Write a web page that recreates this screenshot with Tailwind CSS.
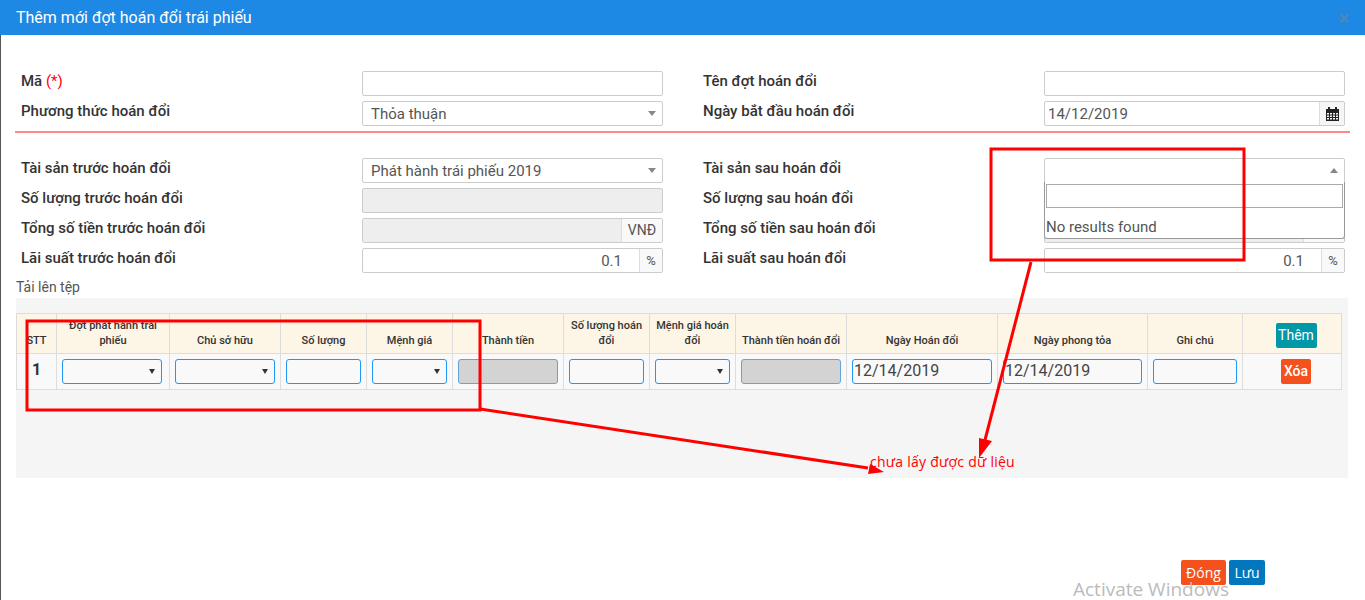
<!DOCTYPE html>
<html lang="vi">
<head>
    <meta charset="UTF-8">
    <title>Thêm mới đợt hoán đổi trái phiếu</title>
    <script src="https://cdn.jsdelivr.net/npm/@tailwindcss/browser@4"></script>
</head>
<body class="relative h-[600px] w-[1365px] overflow-hidden bg-white font-['Roboto',sans-serif] text-[#333]">
    <!-- header -->
    <div class="flex h-[35px] items-center justify-between bg-[#1e88e5] pl-[16px] pr-[16px] text-white">
        <h1 class="text-[16px] leading-none">Thêm mới đợt hoán đổi trái phiếu</h1>
        <span class="text-[20px] font-bold leading-none text-[#4f86b8]">×</span>
    </div>

    <div class="h-[565px] border-l border-[#555]">
        <!-- form top -->
        <div class="grid grid-cols-[341px_301px_40px_341px_301px] gap-y-[5px] pl-[20px] pt-[36px] text-[15px] font-medium">
            <label class="h-[25px] leading-[20px]">Mã <span class="font-normal text-[#f00]">(*)</span></label>
            <input class="h-[25px] rounded-[2px] border border-[#ccc] bg-white">
            <div></div>
            <label class="h-[25px] leading-[20px]">Tên đợt hoán đổi</label>
            <input class="h-[25px] rounded-[2px] border border-[#ccc] bg-white">

            <label class="h-[25px] leading-[20px]">Phương thức hoán đổi</label>
            <div class="flex h-[25px] items-center justify-between rounded-[2px] border border-[#ccc] pl-[8px] pr-[6px] font-normal text-[#555]">
                <span class="pt-[1px]">Thỏa thuận</span>
                <span class="h-0 w-0 border-x-[4px] border-t-[5px] border-x-transparent border-t-[#888]"></span>
            </div>
            <div></div>
            <label class="h-[25px] leading-[20px]">Ngày bắt đầu hoán đổi</label>
            <div class="flex h-[25px] items-center rounded-[2px] border border-[#ccc] font-normal text-[#555]">
                <span class="flex-1 pl-[3px] pt-[1px]">14/12/2019</span>
                <span class="flex h-full w-[25px] items-center justify-center border-l border-[#ddd] bg-[#f5f5f5]">
                    <svg width="13" height="14" viewBox="0 0 13 14"><path fill="#222" d="M0 2h2V0h2v2h5V0h2v2h2v12H0z"/><path fill="#f5f5f5" d="M1 6h2v1.500H1zM4 6h2v1.500H4zM7 6h2v1.500H7zM10 6h2v1.500h-2zM1 8.500h2V10H1zM4 8.500h2V10H4zM7 8.500h2V10H7zM10 8.500h2V10h-2zM1 11h2v1.500H1zM4 11h2v1.500H4zM7 11h2v1.500H7zM10 11h2v1.500h-2z"/></svg>
                </span>
            </div>
        </div>

        <div class="ml-[14px] mt-[5px] h-[2px] w-[1335px] bg-[#f88]"></div>

        <!-- form bottom -->
        <div class="grid grid-cols-[341px_301px_40px_341px_301px] gap-y-[5px] pl-[20px] pt-[25px] text-[15px] font-medium">
            <label class="h-[25px] leading-[20px]">Tài sản trước hoán đổi</label>
            <div class="flex h-[25px] items-center justify-between rounded-[2px] border border-[#ccc] pl-[8px] pr-[6px] font-normal text-[#555]">
                <span class="pt-[1px]">Phát hành trái phiếu 2019</span>
                <span class="h-0 w-0 border-x-[4px] border-t-[5px] border-x-transparent border-t-[#888]"></span>
            </div>
            <div></div>
            <label class="h-[25px] leading-[20px]">Tài sản sau hoán đổi</label>
            <div class="flex h-[25px] items-center justify-end rounded-[2px] border border-[#ccc] pr-[6px]">
                <span class="h-0 w-0 border-x-[4px] border-b-[5px] border-x-transparent border-b-[#888]"></span>
            </div>

            <label class="h-[25px] leading-[20px]">Số lượng trước hoán đổi</label>
            <div class="h-[25px] rounded-[2px] border border-[#ccc] bg-[#eee]"></div>
            <div></div>
            <label class="h-[25px] leading-[20px]">Số lượng sau hoán đổi</label>
            <div class="h-[25px] rounded-[2px] border border-[#ccc] bg-[#eee]"></div>

            <label class="h-[25px] leading-[20px]">Tổng số tiền trước hoán đổi</label>
            <div class="flex h-[25px] rounded-[2px] border border-[#ccc] font-normal">
                <div class="flex-1 bg-[#eee]"></div>
                <span class="flex w-[41px] items-center justify-center border-l border-[#ddd] bg-[#f9f9f9] text-[14px] text-[#555]">VNĐ</span>
            </div>
            <div></div>
            <label class="h-[25px] leading-[20px]">Tổng số tiền sau hoán đổi</label>
            <div class="flex h-[25px] rounded-[2px] border border-[#ccc] font-normal">
                <div class="flex-1 bg-[#eee]"></div>
                <span class="flex w-[41px] items-center justify-center border-l border-[#ddd] bg-[#f9f9f9] text-[14px] text-[#555]">VNĐ</span>
            </div>

            <label class="h-[25px] leading-[20px]">Lãi suất trước hoán đổi</label>
            <div class="flex h-[25px] items-center rounded-[2px] border border-[#ccc] font-normal text-[#555]">
                <span class="flex-1 pr-[17px] pt-[1px] text-right">0.1</span>
                <span class="flex h-full w-[23px] items-center justify-center border-l border-[#ddd] bg-[#f9f9f9] text-[13px]">%</span>
            </div>
            <div></div>
            <label class="h-[25px] leading-[20px]">Lãi suất sau hoán đổi</label>
            <div class="flex h-[25px] items-center rounded-[2px] border border-[#ccc] font-normal text-[#555]">
                <span class="flex-1 pr-[17px] pt-[1px] text-right">0.1</span>
                <span class="flex h-full w-[23px] items-center justify-center border-l border-[#ddd] bg-[#f9f9f9] text-[13px]">%</span>
            </div>
        </div>

        <div class="ml-[15px] mt-[6px] h-[19px] text-[14px] leading-[17px] text-[#555]">Tải lên tệp</div>

        <!-- upload table -->
        <div class="ml-[15px] h-[180px] w-[1332px] bg-[#f5f5f5] pt-[15px]">
            <table class="w-[1325px] table-fixed border-collapse border border-[#ddd] text-[11px]">
                <colgroup>
                    <col class="w-[40px]"><col class="w-[113px]"><col class="w-[111px]"><col class="w-[86px]"><col class="w-[86px]">
                    <col class="w-[111px]"><col class="w-[86px]"><col class="w-[86px]"><col class="w-[111px]"><col class="w-[151px]">
                    <col class="w-[150px]"><col class="w-[95px]"><col class="w-[99px]">
                </colgroup>
                <thead>
                    <tr class="h-[40px] bg-[#fdf5e6] text-center align-bottom font-medium leading-[15px]">
                        <th class="border border-[#ddd] pb-[5px] font-medium">STT</th>
                        <th class="border border-[#ddd] pb-[5px] font-medium">Đợt phát hành trái phiếu</th>
                        <th class="border border-[#ddd] pb-[5px] font-medium">Chủ sở hữu</th>
                        <th class="border border-[#ddd] pb-[5px] font-medium">Số lượng</th>
                        <th class="border border-[#ddd] pb-[5px] font-medium">Mệnh giá</th>
                        <th class="border border-[#ddd] pb-[5px] font-medium">Thành tiền</th>
                        <th class="border border-[#ddd] pb-[5px] font-medium">Số lượng hoán đổi</th>
                        <th class="border border-[#ddd] pb-[5px] font-medium">Mệnh giá hoán đổi</th>
                        <th class="border border-[#ddd] pb-[5px] font-medium">Thành tiền hoán đổi</th>
                        <th class="border border-[#ddd] pb-[5px] font-medium">Ngày Hoán đổi</th>
                        <th class="border border-[#ddd] pb-[5px] font-medium">Ngày phong tỏa</th>
                        <th class="border border-[#ddd] pb-[5px] font-medium">Ghi chú</th>
                        <th class="border border-[#ddd] pb-[5px] pl-[8px] font-medium">
                            <span class="inline-block h-[25px] w-[41px] rounded-[2px] bg-[#0097a7] text-center text-[14px] font-normal leading-[24px] text-white">Thêm</span>
                        </th>
                    </tr>
                </thead>
                <tbody>
                    <tr class="h-[36px] bg-[#f9f9f9] text-center">
                        <td class="border border-[#ddd] pb-[4px] text-[16px] font-bold">1</td>
                        <td class="border border-[#ddd] pl-[5px] pr-[7px]"><div class="flex h-[25px] items-center justify-end rounded-[3px] border border-[#2196f3] pr-[6px]"><span class="h-0 w-0 border-x-[3px] border-t-[5px] border-x-transparent border-t-[#333]"></span></div></td>
                        <td class="border border-[#ddd] px-[5px]"><div class="flex h-[25px] items-center justify-end rounded-[3px] border border-[#2196f3] pr-[6px]"><span class="h-0 w-0 border-x-[3px] border-t-[5px] border-x-transparent border-t-[#333]"></span></div></td>
                        <td class="border border-[#ddd] px-[5px]"><div class="h-[25px] rounded-[3px] border border-[#2196f3]"></div></td>
                        <td class="border border-[#ddd] px-[5px]"><div class="flex h-[25px] items-center justify-end rounded-[3px] border border-[#2196f3] pr-[6px]"><span class="h-0 w-0 border-x-[3px] border-t-[5px] border-x-transparent border-t-[#333]"></span></div></td>
                        <td class="border border-[#ddd] px-[5px]"><div class="h-[25px] rounded-[3px] border border-[#64a5d8] bg-[#d3d3d3]"></div></td>
                        <td class="border border-[#ddd] px-[5px]"><div class="h-[25px] rounded-[3px] border border-[#2196f3]"></div></td>
                        <td class="border border-[#ddd] px-[5px]"><div class="flex h-[25px] items-center justify-end rounded-[3px] border border-[#2196f3] pr-[6px]"><span class="h-0 w-0 border-x-[3px] border-t-[5px] border-x-transparent border-t-[#333]"></span></div></td>
                        <td class="border border-[#ddd] px-[5px]"><div class="h-[25px] rounded-[3px] border border-[#64a5d8] bg-[#d3d3d3]"></div></td>
                        <td class="border border-[#ddd] px-[5px]"><div class="h-[25px] rounded-[3px] border border-[#2196f3] pl-[1px] text-left text-[16px] leading-[21px] text-[#444]">12/14/2019</div></td>
                        <td class="border border-[#ddd] px-[5px]"><div class="h-[25px] rounded-[3px] border border-[#2196f3] pl-[1px] text-left text-[16px] leading-[21px] text-[#444]">12/14/2019</div></td>
                        <td class="border border-[#ddd] px-[5px]"><div class="h-[25px] rounded-[3px] border border-[#2196f3]"></div></td>
                        <td class="border border-[#ddd] pl-[8px]"><span class="inline-block h-[25px] w-[30px] rounded-[2px] bg-[#f4511e] text-center text-[14px] font-medium leading-[25px] text-white">Xóa</span></td>
                    </tr>
                </tbody>
            </table>
        </div>

        <!-- footer buttons -->
        <div class="mr-[100px] mt-[82px] flex justify-end gap-[3px] font-['Open_Sans',sans-serif] text-[14px] text-white">
            <button class="h-[25px] w-[45px] rounded-[2px] bg-[#f4511e]">Đóng</button>
            <button class="h-[25px] w-[36px] rounded-[2px] bg-[#0277bd]">Lưu</button>
        </div>
    </div>

    <!-- select2 dropdown, open over the right column -->
    <div class="absolute left-[1044px] top-[182px] h-[57px] w-[301px] rounded-b-[3px] border border-t-0 border-[#999] bg-white px-[1px] pt-[2px] text-[15px] text-[#555]">
        <div class="h-[24px] border border-[#aaa]"></div>
        <div class="pt-[9px] leading-[20px]">No results found</div>
    </div>

    <!-- annotations drawn on the screenshot -->
    <svg class="absolute left-0 top-0" width="1365" height="600" viewBox="0 0 1365 600" fill="none">
        <rect x="991" y="149" width="253" height="111" stroke="#f00" stroke-width="3"/>
        <rect x="27" y="321" width="453" height="89" stroke="#f00" stroke-width="3"/>
        <path d="M1031 262L985 440" stroke="#f00" stroke-width="3"/>
        <path d="M979 458L979 438L992 441Z" fill="#f00"/>
        <path d="M480 409L868 468" stroke="#f00" stroke-width="3"/>
        <path d="M884 472L868 474L870 464Z" fill="#f00"/>
    </svg>
    <div class="absolute left-[870px] top-[453px] font-['Open_Sans',sans-serif] text-[14px] leading-[18px] tracking-[0.25px] text-[#f00]">chưa lấy được dữ liệu</div>

    <div class="absolute left-[1073px] top-[577px] font-['Open_Sans',sans-serif] text-[19px] leading-[24px] text-[#bbb]">Activate Windows</div>
</body>
</html>
